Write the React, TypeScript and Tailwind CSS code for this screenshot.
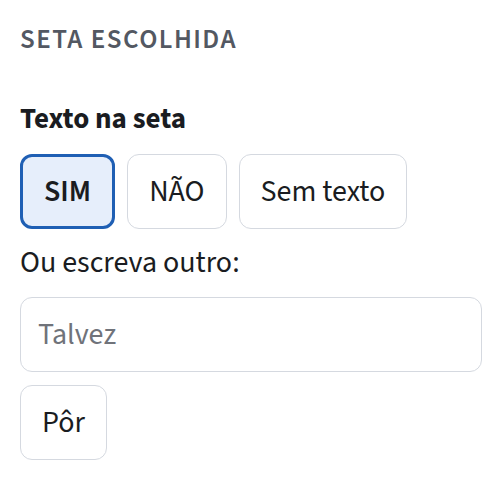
import { useState } from "react";

const opcoes = ["SIM", "NÃO", "Sem texto"];

export default function App() {
  const [escolha, setEscolha] = useState("SIM");
  const [outro, setOutro] = useState("");

  return (
    <div
      className="w-[502px] h-[480px] bg-white px-5 pt-[23px] text-[#1a1c21]"
      style={{ fontFamily: '"Source Sans 3", "Source Sans Pro", Lato, sans-serif' }}
    >
      <h2 className="text-[27px] leading-[34px] font-semibold tracking-[0.055em] text-[#535862]">
        SETA ESCOLHIDA
      </h2>

      <p className="mt-[44px] text-[29px] leading-[36px] font-bold">Texto na seta</p>

      <div className="mt-[17px] flex gap-3">
        {opcoes.map((o) => {
          const ativo = o === escolha;
          return (
            <button
              key={o}
              type="button"
              onClick={() => setEscolha(o)}
              className={
                ativo
                  ? "h-[75px] rounded-xl border-[3px] border-[#1f5fb4] bg-[#e6eefb] px-[21px] text-[30px] font-semibold"
                  : "h-[75px] rounded-xl border border-[#d5d9e0] bg-white px-[21px] text-[30px]"
              }
            >
              {o}
            </button>
          );
        })}
      </div>

      <p className="mt-[16px] text-[30px] leading-[36px]">Ou escreva outro:</p>

      <input
        value={outro}
        onChange={(e) => setOutro(e.target.value)}
        placeholder="Talvez"
        className="mt-[16px] block h-[75px] w-full rounded-xl border border-[#d5d9e0] bg-white px-[17px] text-[30px] outline-none placeholder:text-[#70737a]"
      />

      <button
        type="button"
        className="mt-[13px] h-[75px] rounded-xl border border-[#d5d9e0] bg-white px-[21px] text-[30px]"
      >
        Pôr
      </button>
    </div>
  );
}
